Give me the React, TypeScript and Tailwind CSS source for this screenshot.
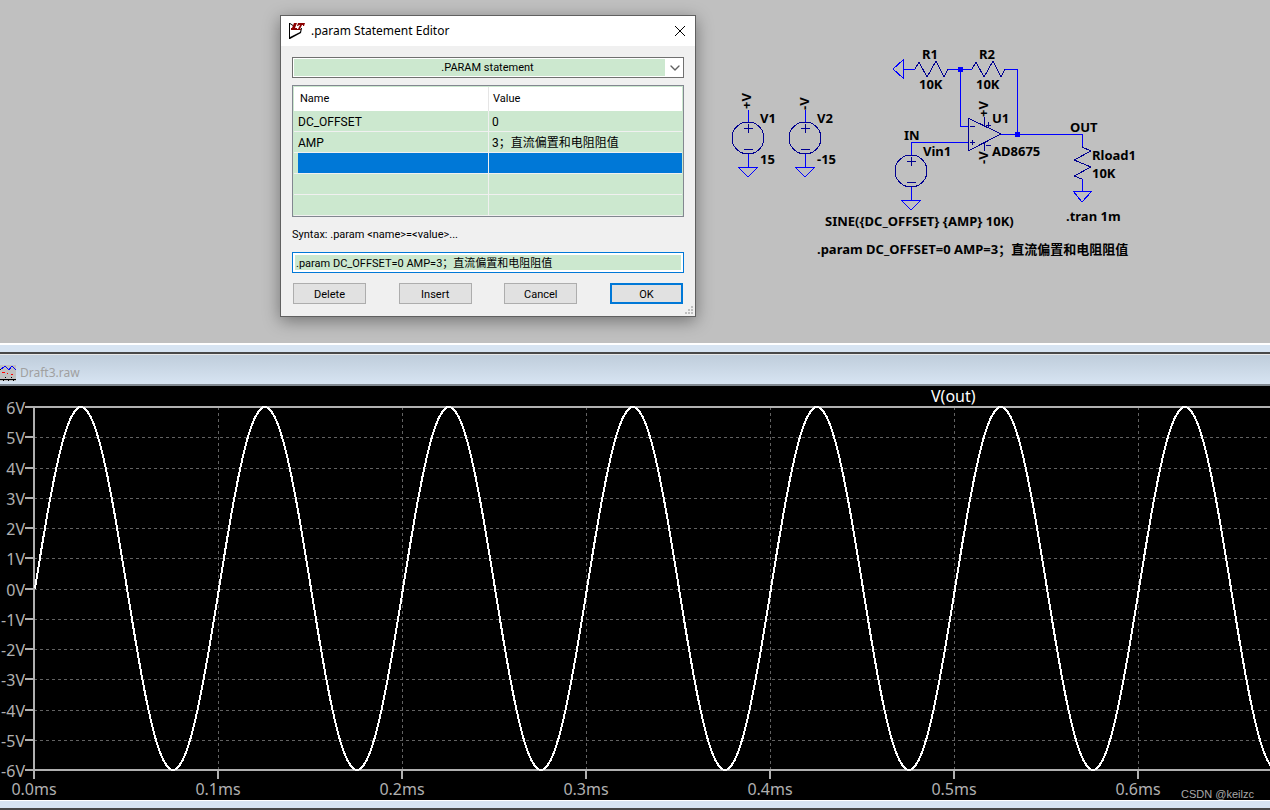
import { ChevronDown } from "lucide-react";

const uiFont = "font-[Roboto,'Noto_Sans_CJK_SC',sans-serif]";
const schematicFont = "font-['Noto_Sans','Noto_Sans_CJK_SC',sans-serif]";

const params = [
  { name: "DC_OFFSET", value: "0" },
  { name: "AMP", value: "3；直流偏置和电阻阻值" },
  { name: "", value: "", selected: true },
  { name: "", value: "" },
  { name: "", value: "" },
];

const labels = [
  { x: 922, y: 59, text: "R1" },
  { x: 979, y: 59, text: "R2" },
  { x: 919, y: 89, text: "10K" },
  { x: 976, y: 89, text: "10K" },
  { x: 760, y: 123, text: "V1" },
  { x: 760, y: 164, text: "15" },
  { x: 817, y: 123, text: "V2" },
  { x: 817, y: 164, text: "-15" },
  { x: 904, y: 140, text: "IN" },
  { x: 923, y: 156, text: "Vin1" },
  { x: 992, y: 123, text: "U1" },
  { x: 992, y: 156, text: "AD8675" },
  { x: 1070, y: 132, text: "OUT" },
  { x: 1092, y: 160, text: "Rload1" },
  { x: 1092, y: 178, text: "10K" },
  { x: 1066, y: 221, text: ".tran 1m" },
  { x: 825, y: 226, text: "SINE({DC_OFFSET} {AMP} 10K)" },
  { x: 817, y: 254, text: ".param DC_OFFSET=0 AMP=3；直流偏置和电阻阻值" },
];

function Source({ x, y }: { x: number; y: number }) {
  return (
    <g transform={`translate(${x} ${y})`}>
      <g stroke="#000090">
        <circle r="16" />
        <path d="M-4 -10H5M0 -14V-5M-4 11H5" />
      </g>
      <path d="M0 -16V-28M0 16V29M-10 29H10L0 39Z" stroke="#0000ff" />
    </g>
  );
}

function Schematic() {
  return (
    <svg className={`block h-[343px] w-full ${schematicFont}`} role="img" aria-label="Schematic">
      <g fill="none" strokeWidth="1" shapeRendering="crispEdges">
        <Source x={748} y={138} />
        <Source x={805} y={138} />
        <Source x={911} y={171} />
        <g stroke="#0000ff">
          <path d="M903 60V78L893 69ZM903 69H915M947 69H972M1004 69H1017V134M960 69V126H968" />
          <path d="M911 154V142H968M1001 134H1082V146M1082 179V191M1073 191H1092L1082 202Z" />
        </g>
        <g stroke="#000090">
          <path d="M915 69L919 62L927 77L936 61L944 77L948 69" />
          <path d="M972 69L976 62L984 77L993 61L1001 77L1005 69" />
          <path d="M1082 146V147L1091 151L1074 160L1091 167L1074 176L1082 179" />
          <path d="M968 118V151L1001 134Z" />
          <path d="M970 126H975M970 142H975M972 140V145M984 117V126M984 142V151" />
          <path d="M986 125H991M988 122V127M986 145H991" />
        </g>
        <path d="M958 67h5v5h-5zM1015 132h5v5h-5z" fill="#0000ff" />
      </g>
      <g className="text-[13px] font-bold" fill="#000">
        {labels.map((l) => (
          <text key={`${l.x}-${l.y}`} x={l.x} y={l.y}>
            {l.text}
          </text>
        ))}
        <text transform="translate(751 109) rotate(-90)">+V</text>
        <text transform="translate(809 110) rotate(-90)">-V</text>
        <text transform="translate(988 117) rotate(-90)">+V</text>
        <text transform="translate(988 164) rotate(-90)">-V</text>
      </g>
    </svg>
  );
}

function LtLogo() {
  return (
    <svg className="size-4" viewBox="0 0 16 16" fill="none" aria-hidden="true">
      <path d="M0 0H1L4 2V3L1 1V14L11 9L12 5H13L12 10L1 16H0Z" fill="#000" />
      <path d="M5 0H8L6 5H8V7H2V5H3ZM9 0H16L15 3H14V2H13L11 6H12V7H8V6H9L11 2H10L9 3H8Z" fill="#8b0000" />
    </svg>
  );
}

function ParamDialog() {
  const button = "h-[21px] w-[73px] bg-[#e1e1e1] pt-px leading-none";

  return (
    <div
      role="dialog"
      aria-labelledby="dialog-title"
      className={`absolute top-[15px] left-[280px] w-[416px] border border-[#606060] bg-[#f0f0f0] text-[11px] text-black shadow-[0_4px_16px_rgba(0,0,0,0.4)] ${uiFont}`}
    >
      <header className="flex h-[30px] items-center gap-1.5 bg-white pr-[7px] pb-px pl-2">
        <LtLogo />
        <h1 id="dialog-title" className="flex-1 pt-px font-['Noto_Sans',sans-serif] text-xs">
          .param Statement Editor
        </h1>
        <button type="button" aria-label="Close" className="flex size-4 items-center justify-center">
          <svg className="size-3" viewBox="0 0 12 12" stroke="#000" fill="none" aria-hidden="true">
            <path d="M1 1L11 11M11 1L1 11" />
          </svg>
        </button>
      </header>

      <form className="px-[11px] pt-[11px] pb-3" onSubmit={(e) => e.preventDefault()}>
        <div className="relative h-[21px] border border-[#707070] bg-white p-px">
          <select
            aria-label="Statement type"
            className="block h-full w-full appearance-none border-r-[17px] border-white bg-[#cce8cf] pl-4 text-center leading-none outline-none [text-align-last:center]"
          >
            <option>.PARAM statement</option>
          </select>
          <ChevronDown className="pointer-events-none absolute top-0.5 right-0 size-4 text-[#606060]" strokeWidth={2} />
        </div>

        <div className="mt-[7px] border border-[#828790] bg-[#cce8cf] px-px pt-px">
          <table className="w-full table-fixed border-separate border-spacing-0">
            <thead>
              <tr className="h-6 bg-white text-left">
                <th className="w-[195px] border-r border-[#e5e5e5] p-0 pt-px pl-1.5 font-normal">Name</th>
                <th className="p-0 pt-px pl-1 font-normal">Value</th>
              </tr>
            </thead>
            <tbody className="text-xs">
              {params.map((p, i) => (
                <tr key={i} className="h-[21px]">
                  <td className="border-r border-b border-[#f0f0f0] p-0 pl-1">
                    <div className={p.selected ? "h-5 bg-[#0078d7]" : "h-5 leading-[22px]"}>{p.name}</div>
                  </td>
                  <td className="border-b border-[#f0f0f0] p-0">
                    <div className={p.selected ? "h-5 bg-[#0078d7]" : "h-5 pl-[3px] leading-[22px]"}>{p.value}</div>
                  </td>
                </tr>
              ))}
            </tbody>
          </table>
        </div>

        <label htmlFor="statement" className="mt-2.5 block leading-4">
          Syntax: .param &lt;name&gt;=&lt;value&gt;...
        </label>
        <div className="mt-[9px] h-[21px] border border-[#0078d7] bg-white p-0.5">
          <input
            id="statement"
            type="text"
            autoFocus
            defaultValue=".param DC_OFFSET=0 AMP=3；直流偏置和电阻阻值"
            className="block h-full w-full bg-[#cce8cf] pb-0.5 pl-px leading-none outline-none"
          />
        </div>

        <div className="mt-2.5 flex justify-between px-px">
          <button type="button" className={`${button} border border-[#adadad]`}>Delete</button>
          <button type="button" className={`${button} border border-[#adadad]`}>Insert</button>
          <button type="button" className={`${button} border border-[#adadad]`}>Cancel</button>
          <button type="submit" className={`${button} border-2 border-[#0078d7]`}>OK</button>
        </div>
      </form>

      <svg className="absolute right-0.5 bottom-0.5 size-2" viewBox="0 0 8 8" fill="#bfbfbf" aria-hidden="true">
        <path d="M6 0h2v2h-2zM3 3h2v2h-2zM6 3h2v2h-2zM0 6h2v2h-2zM3 6h2v2h-2zM6 6h2v2h-2z" />
      </svg>
    </div>
  );
}

const LEFT = 34;
const TOP = 21;
const HEIGHT = 363;
const PERIOD = 184;
const END = LEFT + PERIOD * 7;

const wave = Array.from({ length: 323 }, (_, i) => {
  const y = TOP + HEIGHT / 2 - (HEIGHT / 2) * Math.sin((2 * Math.PI * i * 4) / PERIOD);
  return `${LEFT + 1 + i * 4},${y.toFixed(1)}`;
}).join(" ");

const volts = Array.from({ length: 13 }, (_, i) => ({
  label: `${6 - i}V`,
  y: Math.round(TOP + (i * HEIGHT) / 12),
}));

const times = Array.from({ length: 7 }, (_, i) => ({
  label: `${(i / 10).toFixed(1)}ms`,
  x: LEFT + i * PERIOD,
}));

function Plot() {
  return (
    <svg className="block h-[414px] w-full bg-black font-['Noto_Sans',sans-serif] text-base" role="img" aria-label="V(out)">
      <g stroke="#626262" strokeDasharray="3 3" shapeRendering="crispEdges">
        {volts.slice(1, -1).map((v) => (
          <line key={v.label} x1={LEFT} x2={END} y1={v.y} y2={v.y} />
        ))}
        {times.slice(1).map((t) => (
          <line key={t.label} x1={t.x} x2={t.x} y1={TOP} y2={TOP + HEIGHT} />
        ))}
      </g>
      <g stroke="#b0b0b0" strokeWidth="2" shapeRendering="crispEdges">
        {volts.map((v) => (
          <line key={v.label} x1={25} x2={LEFT} y1={v.y} y2={v.y} />
        ))}
        {times.map((t) => (
          <line key={t.label} x1={t.x} x2={t.x} y1={TOP + HEIGHT} y2={TOP + HEIGHT + 9} />
        ))}
        <path d={`M${LEFT} ${TOP}V${TOP + HEIGHT}M${LEFT} ${TOP}H${END}M${LEFT} ${TOP + HEIGHT}H${END}`} />
      </g>
      <polyline points={wave} fill="none" stroke="#fff" strokeWidth="2" shapeRendering="crispEdges" />
      <g fill="#b0b0b0">
        {volts.map((v) => (
          <text key={v.label} x={25} y={v.y + 7} textAnchor="end">{v.label}</text>
        ))}
        {times.map((t) => (
          <text key={t.label} x={t.x} y={TOP + HEIGHT + 25} textAnchor="middle">{t.label}</text>
        ))}
      </g>
      <text x={931} y={16} fill="#fff">V(out)</text>
    </svg>
  );
}

function WaveIcon() {
  return (
    <svg className="size-4" viewBox="0 0 16 16" fill="none" shapeRendering="crispEdges" aria-hidden="true">
      <path d="M0 0H16V16H0Z" fill="#c0c0c0" />
      <path d="M0 5L5 1L9 5L12 1L16 5" stroke="#0000ff" />
      <path d="M2 7h3v1h-3zM7 8h1v1h-1zM11 9h2v1h-2z" fill="#ff0000" />
      <path d="M0 14h16v1h-16zM0 4h1v1h-1zM5 12h1v1h-1zM11 12h1v1h-1zM3 15h1v1h-1zM8 15h1v1h-1zM13 15h1v1h-1z" fill="#000" />
    </svg>
  );
}

export default function App() {
  return (
    <main className="relative overflow-hidden bg-[#d7e4f2]">
      <section className="relative bg-[#c0c0c0]">
        <Schematic />
        <ParamDialog />
      </section>

      <div className="h-[9px] border-t-2 border-white" />

      <section className="border-t-2 border-[#484848]">
        <header className="flex h-8 items-center gap-1 border-t border-b-2 border-t-[#e8e8e8] border-b-[#808890] bg-linear-to-b from-[#bfcddb] to-[#d7e4f2] pt-1.5">
          <WaveIcon />
          <h2 className="font-['Noto_Sans',sans-serif] text-xs text-[#a0a0a0]">Draft3.raw</h2>
        </header>
        <div className="relative">
          <Plot />
          <span className="absolute right-4 bottom-0 font-['Liberation_Sans',sans-serif] text-[11px] leading-3 text-[#a8a8a8]">
            CSDN @keilzc
          </span>
        </div>
      </section>

      <footer className="h-2.5 border-t border-b-2 border-t-white border-b-[#484848]" />
    </main>
  );
}
